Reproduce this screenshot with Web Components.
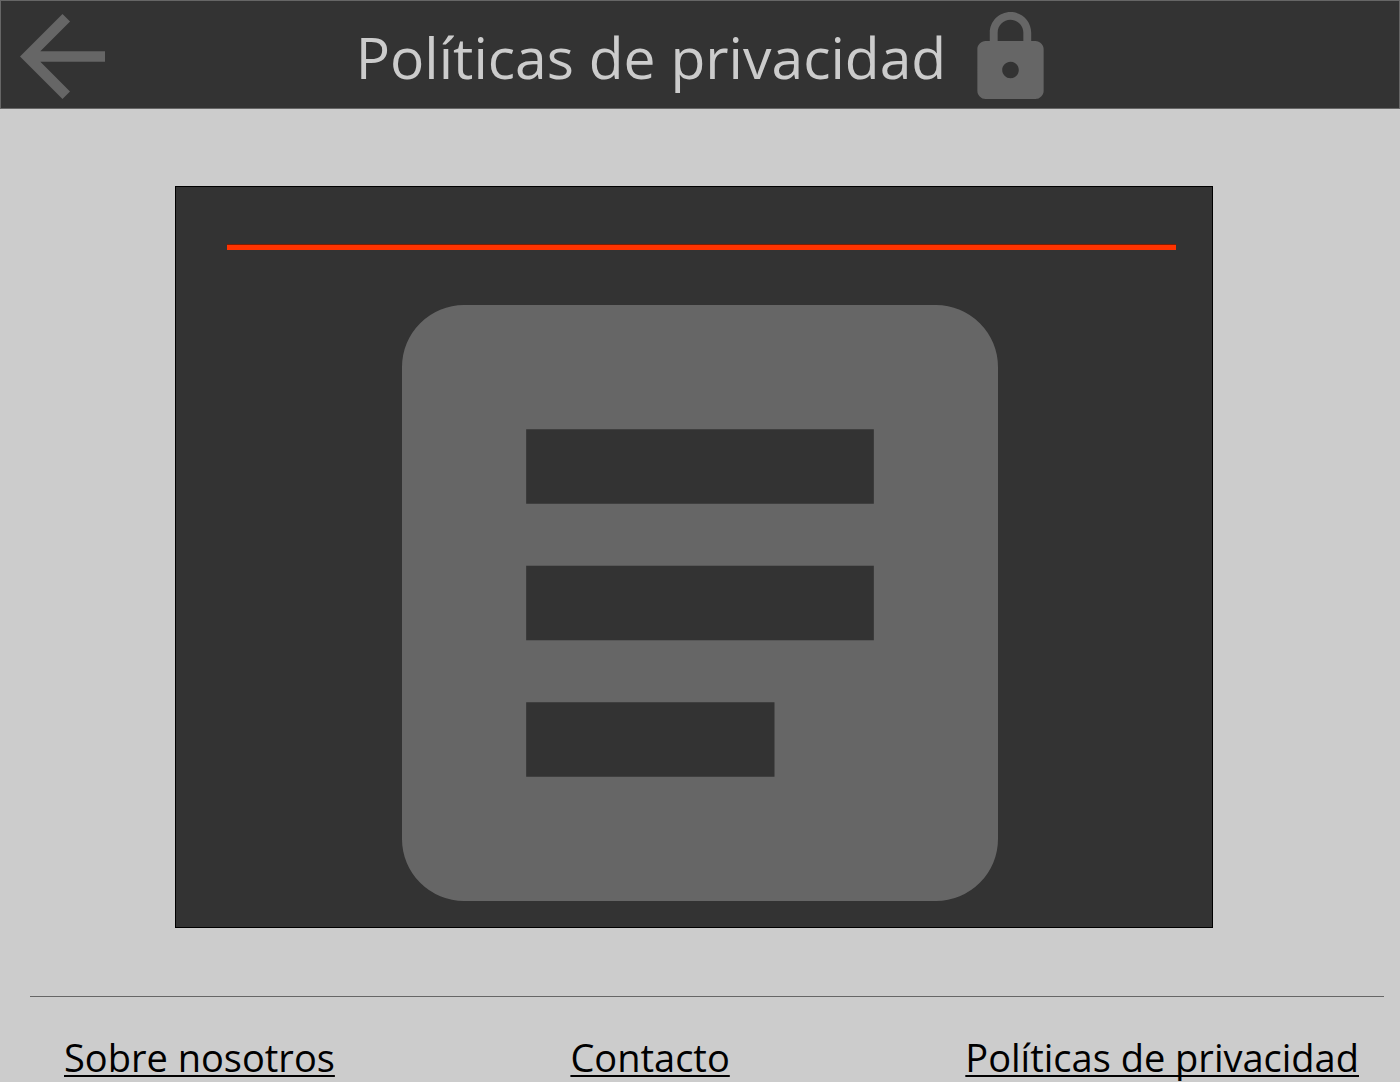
<!DOCTYPE html>
<html lang="es">
<head>
<meta charset="utf-8">
<meta name="viewport" content="width=device-width, initial-scale=1">
<title>Políticas de privacidad</title>
<style>
  body { margin: 0; background: #ccc; font-family: "Segoe UI", "Open Sans", "Noto Sans", sans-serif; }
</style>
</head>
<body>
<policy-page>
  <page-header slot="header">Políticas de privacidad</page-header>
  <document-card></document-card>
  <page-footer slot="footer">
    <footer-link href="#nosotros">Sobre nosotros</footer-link>
    <footer-link href="#contacto">Contacto</footer-link>
    <footer-link href="#privacidad">Políticas de privacidad</footer-link>
  </page-footer>
</policy-page>
<script>
  function define(name, html, setup) {
    customElements.define(name, class extends HTMLElement {
      constructor() {
        super();
        this.attachShadow({ mode: 'open' }).innerHTML = html;
      }
      connectedCallback() {
        if (setup) setup(this);
      }
    });
  }

  define('policy-page', `
    <style>
      :host { display: flex; flex-direction: column; }
      main { padding: 77px 187px 68px 175px; }
    </style>
    <slot name="header"></slot>
    <main><slot></slot></main>
    <slot name="footer"></slot>`);

  define('page-header', `
    <style>
      :host { display: block; }
      header { display: grid; grid-template-columns: 1fr auto 1fr; align-items: center;
        box-sizing: border-box; padding: 11px 19px 9px; background: #333; border: 1px solid #666; }
      button { justify-self: start; display: block; padding: 1px 0 0; border: 0; background: none; color: #666; cursor: pointer; }
      svg { display: block; fill: #666; }
      .title { display: flex; align-items: center; gap: 31px; }
      h1 { margin: 0; padding-top: 2px; font-size: 57px; line-height: 80px; font-weight: 400; color: #ccc; white-space: nowrap; }
    </style>
    <header>
      <button type="button" aria-label="Volver">
        <svg width="85" height="85" viewBox="4 4 16 16"><path d="M20 11H7.83l5.59-5.59L12 4l-8 8 8 8 1.41-1.41L7.83 13H20v-2z"/></svg>
      </button>
      <div class="title">
        <h1><slot></slot></h1>
        <svg width="67" height="87" viewBox="4 1 16 21" aria-hidden="true"><path d="M18 8h-1V6c0-2.76-2.24-5-5-5S7 3.24 7 6v2H6c-1.1 0-2 .9-2 2v10c0 1.1.9 2 2 2h12c1.1 0 2-.9 2-2V10c0-1.1-.9-2-2-2zm-6 9c-1.1 0-2-.9-2-2s.9-2 2-2 2 .9 2 2-.9 2-2 2zm3.1-9H8.9V6c0-1.71 1.39-3.1 3.1-3.1 1.71 0 3.1 1.39 3.1 3.1v2z"/></svg>
      </div>
    </header>`);

  define('document-card', `
    <style>
      :host { display: block; }
      section { display: flex; flex-direction: column; gap: 55px; padding: 57px 36px 26px 51px; background: #333; border: 1px solid #000; }
      hr { width: 100%; height: 5px; margin: 0; border: 0; border-top: 1px solid #821c00; background: #ff3300; }
      svg { display: block; align-self: center; width: 64%; max-width: 596px; height: auto; margin-right: 3px; }
    </style>
    <section>
      <hr>
      <svg viewBox="0 0 24 24" aria-hidden="true">
        <path fill="#666" fill-rule="evenodd" d="M2.5 0h19A2.5 2.5 0 0 1 24 2.5v19a2.5 2.5 0 0 1-2.5 2.5h-19A2.5 2.5 0 0 1 0 21.5v-19A2.5 2.5 0 0 1 2.5 0zM5 5v3h14V5zM5 10.5v3h14v-3zM5 16v3h10v-3z"/>
      </svg>
    </section>`);

  define('page-footer', `
    <style>
      :host { display: block; }
      footer { margin: 0 16px 0 30px; border-top: 1px solid #666; }
      nav { display: flex; justify-content: space-between; padding: 35px 25px 0 34px; }
    </style>
    <footer><nav aria-label="Pie de página"><slot></slot></nav></footer>`);

  define('footer-link', `
    <style>
      :host { display: block; }
      a { display: block; font-size: 38px; line-height: 50px; color: #000; white-space: nowrap;
        text-decoration: underline; text-decoration-thickness: 2px; text-underline-offset: 3px; text-decoration-skip-ink: none; }
    </style>
    <a><slot></slot></a>`,
    el => el.shadowRoot.querySelector('a').setAttribute('href', el.getAttribute('href')));
</script>
</body>
</html>
